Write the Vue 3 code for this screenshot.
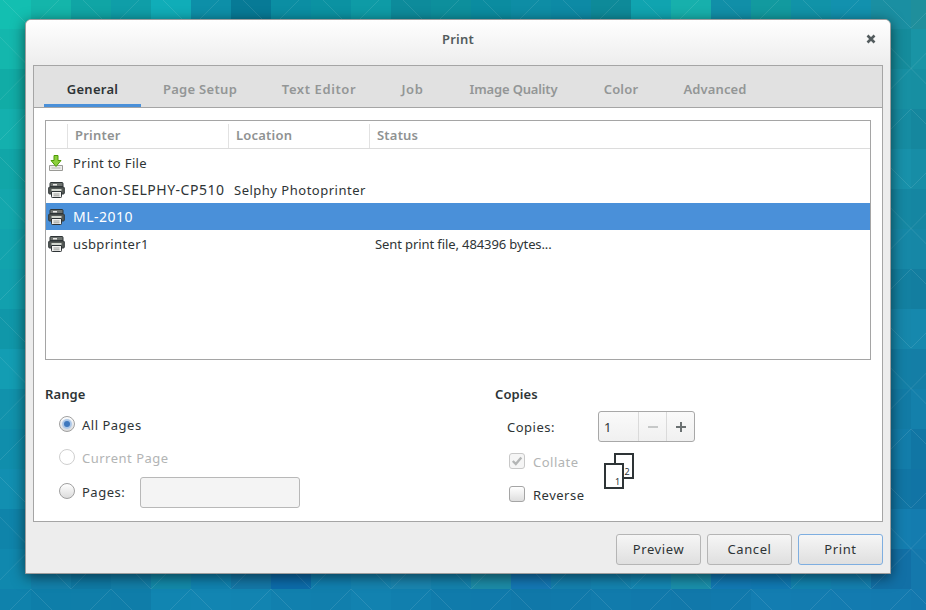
<script setup>
const tabs = [
  { label: 'General', width: 97, spacing: 0.3 },
  { label: 'Page Setup', width: 118, spacing: 0.3 },
  { label: 'Text Editor', width: 120, spacing: 0.6 },
  { label: 'Job', width: 67, spacing: 0.6 },
  { label: 'Image Quality', width: 135, spacing: -0.15 },
  { label: 'Color', width: 80, spacing: 0.2 },
  { label: 'Advanced', width: 108, spacing: 0.1 },
]
const printers = [
  { name: 'Print to File', location: '', status: '', file: true },
  { name: 'Canon-SELPHY-CP510', location: 'Selphy Photoprinter', status: '', caps: true },
  { name: 'ML-2010', location: '', status: '', selected: true, caps: true },
  { name: 'usbprinter1', location: '', status: 'Sent print file, 484396 bytes...' },
]

const topRow = ['#13bfb1','#14b5aa','#10a5a5','#0f9ea8','#10adb8','#0d8fa8','#077a96','#0b8ea3','#0b92a2','#0e9ba6','#0d8b9b','#0d8f9c','#0b8ca0','#0e8da5','#0d8aa5','#0e8a99','#10a4b0','#17b0ac','#118fa8','#129a9f','#1193a8','#1291ae','#1a8fa2','#1f8f9c']
const row589 = ['#1088ae','#1381ab','#0f7aa5','#127ea8','#138aaa','#1083b0','#1478a8','#0c6cab','#1180b0','#1584b0','#1a86b0','#1483ae','#1c8ca8','#1478b5','#1480ae','#1484b0','#1488b4','#1a90ac','#127ab5','#107ab4','#1284b0','#1480b0','#1270a6','#1478ac']
const mix = (a, b, t) => a + (b - a) * t
const cells = []
for (let r = 0; r < 16; r++) {
  for (let c = 0; c < 24; c++) {
    const x = c === 0 ? -9 : 31 + (c - 1) * 40
    const y = 29 + (r - 1) * 40
    const u = c / 23
    const v = Math.min(r / 14, 1)
    const top = [mix(20, 24, u), mix(186, 146, u), mix(172, 160, u)]
    const bot = [mix(16, 18, u), mix(132, 118, u), mix(174, 172, u)]
    const n = (Math.sin(c * 12.9898 + r * 78.233) * 43758.5453) % 1
    const rgb = top.map((t, i) => Math.round(mix(t, bot[i], v) + n * (i === 0 ? 2 : 6)))
    let fill = `rgb(${rgb.join(',')})`
    if (r === 0) fill = topRow[c]
    if (r === 14) fill = row589[c]
    cells.push({ x, y, fill })
  }
}
const lines = []
for (let a = 0; a < 13; a++) {
  for (let b = 0; b < 5; b++) {
    const cx = 31 + a * 80
    const oy = b * 160 - 160
    lines.push(`M${cx - 40} ${oy - 12}L${cx} ${oy + 28}L${cx + 40} ${oy - 12}`)
    lines.push(`M${cx - 40} ${oy + 28}L${cx + 40} ${oy + 109}M${cx - 40} ${oy + 109}L${cx + 40} ${oy + 28}`)
    lines.push(`M${cx - 40} ${oy + 149}L${cx} ${oy + 109}L${cx + 40} ${oy + 149}`)
  }
}
const latticePath = lines.join('')
</script>

<template>
  <div class="page">
    <svg class="wallpaper" width="926" height="610" viewBox="0 0 926 610" aria-hidden="true">
      <rect v-for="(cell, i) in cells" :key="i" :x="cell.x" :y="cell.y" width="40" height="40" :fill="cell.fill" />
      <path :d="latticePath" fill="none" stroke="#ffffff" stroke-opacity="0.1" stroke-width="1" />
    </svg>

    <section class="window">
      <header class="titlebar">
        <span class="title">Print</span>
        <svg class="close" width="10" height="10" viewBox="0 0 10 10">
          <path d="M1.5 1.5L8.5 8.5M8.5 1.5L1.5 8.5" stroke="#535c5e" stroke-width="2.6" fill="none" />
        </svg>
      </header>

      <div class="notebook">
        <nav class="tabs">
          <span
            v-for="(tab, i) in tabs"
            :key="tab.label"
            class="tab"
            :class="{ active: i === 0 }"
            :style="{ width: tab.width + 'px', letterSpacing: tab.spacing + 'px' }"
          >{{ tab.label }}</span>
        </nav>

        <div class="panel">
          <div class="tree">
            <div class="tree-head">
              <span class="col col-icon"></span>
              <span class="col col-printer">Printer</span>
              <span class="col col-location">Location</span>
              <span class="col col-status">Status</span>
            </div>
            <div v-for="p in printers" :key="p.name" class="tree-row" :class="{ selected: p.selected }">
              <span class="cell-icon">
                <svg v-if="p.file" width="16" height="16" viewBox="0 0 16 16">
                  <path d="M1.5 10.500h13v5h-13z" fill="#eeeeec" stroke="#9a9a96" />
                  <path d="M3.500 13h9" stroke="#b8b8b4" fill="none" />
                  <path d="M6 .5h4v5h3L8 11.500 3 5.500h3z" fill="#8ccf3c" stroke="#4e9a06" />
                </svg>
                <svg v-else width="17" height="16" viewBox="0 0 17 16">
                  <path d="M3 .5h11a1 1 0 0 1 1 1v3H2v-3a1 1 0 0 1 1-1z" fill="#6e7370" stroke="#2e3436" />
                  <path d="M5 2h4v1.500H5z" fill="#e8e8e6" />
                  <path d="M1.500 5h14a1 1 0 0 1 .8 1v5a1 1 0 0 1-1 1H1.700a1 1 0 0 1-1-1V6a1 1 0 0 1 .8-1z" fill="#555a57" stroke="#2e3436" />
                  <path d="M3.500 7h10v3h-10z" fill="#d3d7cf" />
                  <path d="M3.500 9.500h10v5.200a.8.8 0 0 1-.8.8H4.300a.8.8 0 0 1-.8-.8z" fill="#f3f3f1" stroke="#2e3436" />
                  <path d="M5.500 12h6M5.500 13.800h6" stroke="#9a9c98" fill="none" />
                </svg>
              </span>
              <span class="cell-name" :class="{ caps: p.caps }">{{ p.name }}</span>
              <span class="cell-location">{{ p.location }}</span>
              <span class="cell-status">{{ p.status }}</span>
            </div>
          </div>

          <div class="options">
            <div class="group">
              <h3 class="group-title">Range</h3>
              <div class="option range-first">
                <span class="radio checked"><i></i></span>
                <span class="label">All Pages</span>
              </div>
              <div class="option disabled">
                <span class="radio"></span>
                <span class="label">Current Page</span>
              </div>
              <div class="option pages-row">
                <span class="radio"></span>
                <span class="label pages-label">Pages:</span>
                <span class="entry"></span>
              </div>
            </div>

            <div class="group copies">
              <h3 class="group-title">Copies</h3>
              <div class="copies-row">
                <span class="copies-label">Copies:</span>
                <div class="spin">
                  <span class="spin-value">1</span>
                  <span class="spin-btn minus">
                    <svg width="10" height="10" viewBox="0 0 10 10"><path d="M0 5h10" stroke="#c6c8c8" stroke-width="2" /></svg>
                  </span>
                  <span class="spin-btn">
                    <svg width="10" height="10" viewBox="0 0 10 10"><path d="M0 5h10M5 0v10" stroke="#6b7172" stroke-width="2" /></svg>
                  </span>
                </div>
              </div>
              <div class="collate">
                <div class="checks">
                  <div class="option disabled small">
                    <span class="check">
                      <svg width="12" height="12" viewBox="0 0 12 12"><path d="M1.800 6l3 3 5.500-6.500" fill="none" stroke="#b3b5b5" stroke-width="2.400" /></svg>
                    </span>
                    <span class="label">Collate</span>
                  </div>
                  <div class="option small">
                    <span class="check"></span>
                    <span class="label">Reverse</span>
                  </div>
                </div>
                <svg class="preview" width="32" height="37" viewBox="0 0 32 37">
                  <rect x="11" y="1" width="18" height="24" fill="#fff" stroke="#2e3436" stroke-width="2" />
                  <rect x="1" y="11" width="18" height="24" fill="#fff" stroke="#2e3436" stroke-width="2" />
                  <text x="20.500" y="22" class="page-num">2</text>
                  <text x="11" y="32" class="page-num">1</text>
                </svg>
              </div>
            </div>
          </div>
        </div>
      </div>

      <footer class="actions">
        <button class="btn" type="button">Preview</button>
        <button class="btn" type="button">Cancel</button>
        <button class="btn default" type="button">Print</button>
      </footer>
    </section>
  </div>
</template>

<style>
html, body { margin: 0; background: #0f8aa5; }
</style>

<style scoped>
.page {
  position: relative;
  width: 926px;
  height: 610px;
  overflow: hidden;
  box-sizing: border-box;
  padding: 19px 0 0 25px;
  font-family: "Noto Sans", "Open Sans", sans-serif;
  font-size: 13px;
  letter-spacing: 0.5px;
  color: #2e3436;
}
.wallpaper { position: absolute; left: 0; top: 0; }
.window {
  position: relative;
  box-sizing: border-box;
  width: 866px;
  height: 555px;
  background: #ededed;
  border: 1px solid #9e9e9e;
  border-radius: 6px 6px 0 0;
  box-shadow: 0 3px 14px rgba(0, 0, 0, 0.55);
  display: flex;
  flex-direction: column;
}
.titlebar {
  height: 45px;
  flex: none;
  display: flex;
  align-items: center;
  justify-content: center;
  background: linear-gradient(#ffffff, #ededed);
  border-radius: 5px 5px 0 0;
  position: relative;
}
.title { font-weight: 600; color: #535c5e; margin-top: -8px; letter-spacing: 0.2px; }
.close { position: absolute; right: 14px; top: 14px; }
.notebook {
  margin: 0 7px;
  height: 457px;
  box-sizing: border-box;
  border: 1px solid #a5a5a5;
  background: #fff;
  display: flex;
  flex-direction: column;
}
.tabs {
  height: 42px;
  box-sizing: border-box;
  flex: none;
  background: #e1e1e1;
  border-bottom: 1px solid #a5a5a5;
  padding-left: 10px;
  display: flex;
}
.tab {
  height: 41px;
  box-sizing: border-box;
  line-height: 46px;
  text-align: center;
  font-weight: 600;
  color: #939696;
  white-space: nowrap;
}
.tab.active { color: #2e3436; border-bottom: 3px solid #4a90d9; }
.panel { flex: 1; padding: 12px 11px 0; }
.tree {
  box-sizing: border-box;
  height: 240px;
  border: 1px solid #a5a5a5;
}
.tree-head {
  display: flex;
  height: 28px;
  box-sizing: border-box;
  border-bottom: 1px solid #dcdcdc;
  color: #8f9292;
  font-weight: 600;
  letter-spacing: 0.2px;
}
.col {
  box-sizing: border-box;
  border-right: 1px solid #e2e2e2;
  height: 24px;
  margin-top: 3px;
  line-height: 23px;
  padding-left: 7px;
}
.col-icon { width: 22px; padding: 0; }
.col-printer { width: 161px; }
.col-location { width: 141px; }
.col-status { border: 0; padding-left: 7px; }
.tree-row {
  display: flex;
  height: 27px;
  align-items: center;
  white-space: nowrap;
}
.tree-row.selected { background: #4a90d9; color: #fff; }
.cell-icon { width: 27px; flex: none; display: flex; padding-left: 2px; box-sizing: border-box; }
.cell-name { width: 161px; flex: none; letter-spacing: 0.35px; }
.cell-name.caps { font-size: 14px; letter-spacing: 0.5px; }
.cell-location { width: 141px; flex: none; }
.cell-status { letter-spacing: -0.1px; }
.options { display: flex; margin-top: 25px; }
.group { width: 450px; flex: none; }
.group-title {
  margin: 0;
  font-size: 13px;
  line-height: 18px;
  font-weight: 600;
  letter-spacing: 0.1px;
}
.option {
  display: flex;
  align-items: center;
  height: 33px;
  padding-left: 14px;
}
.range-first { margin-top: 4px; }
.pages-row { height: 36px; }
.radio {
  width: 16px;
  height: 16px;
  flex: none;
  box-sizing: border-box;
  border: 1px solid #a0a0a0;
  border-radius: 50%;
  background: linear-gradient(#ffffff, #dcdcdc);
  display: flex;
  align-items: center;
  justify-content: center;
}
.radio i {
  width: 6px;
  height: 6px;
  border-radius: 50%;
  background: #3f78bd;
  box-shadow: 0 0 1px 2px #a9c6e8;
}
.label { margin-left: 7px; padding-top: 2px; }
.pages-label { width: 58px; flex: none; }
.entry {
  width: 160px;
  height: 31px;
  flex: none;
  box-sizing: border-box;
  border: 1px solid #b8b8b8;
  border-radius: 3px;
  background: #f4f4f4;
  margin-top: 2px;
}
.disabled .label { color: #b2b4b4; }
.disabled .radio { background: #fff; border-color: #cfcfcf; }
.copies { width: 376px; }
.copies-row {
  display: flex;
  align-items: center;
  height: 31px;
  margin-top: 8px;
  padding-left: 12px;
}
.copies-label { width: 91px; padding-top: 1px; }
.spin {
  width: 97px;
  height: 31px;
  box-sizing: border-box;
  border: 1px solid #a8a8a8;
  border-radius: 3px;
  background: linear-gradient(#fafafa, #f0f0f0);
  display: flex;
  align-items: center;
}
.spin-value { flex: 1; padding-left: 5px; }
.spin-btn {
  width: 28px;
  height: 100%;
  box-sizing: border-box;
  border-left: 1px solid #dadada;
  display: flex;
  align-items: center;
  justify-content: center;
}
.collate { display: flex; }
.checks { width: 109px; flex: none; margin-top: 2px; }
.option.small { padding-left: 14px; height: 33px; }
.check {
  width: 16px;
  height: 16px;
  flex: none;
  box-sizing: border-box;
  border: 1px solid #a5a5a5;
  border-radius: 3px;
  background: linear-gradient(#ffffff, #dedede);
  display: flex;
  align-items: center;
  justify-content: center;
}
.disabled .check { background: #f5f5f5; border-color: #c8c8c8; }
.option.small .label { margin-left: 8px; padding-top: 3px; }
.preview { margin-top: 11px; flex: none; }
.page-num { font-size: 9px; fill: #2e3436; font-family: "Noto Sans", sans-serif; }
.actions {
  flex: 1;
  display: flex;
  justify-content: flex-end;
  align-items: center;
  gap: 6px;
  padding: 3px 7px 0 0;
}
.btn {
  width: 85px;
  height: 31px;
  box-sizing: border-box;
  border: 1px solid #b5b5b5;
  border-radius: 3px;
  background: linear-gradient(#f6f6f6, #dfdfdf);
  color: #2e3436;
  font: inherit;
  letter-spacing: 0.6px;
  padding: 0;
}
.btn.default { border-color: #7eaee0; }
</style>
